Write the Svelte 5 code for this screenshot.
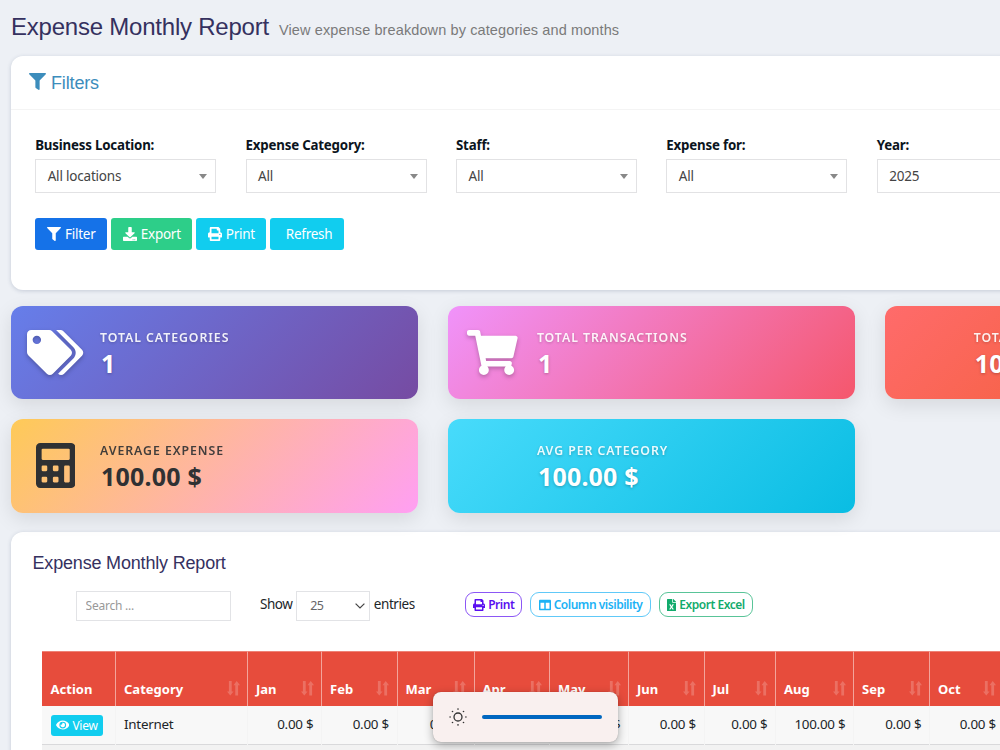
<script lang="ts">
  type Icon = { box: string; d: string };

  const icons: Record<string, Icon> = {
    filter: {
      box: '0 0 512 512',
      d: 'M487.976 0H24.028C2.71 0-8.047 25.866 7.058 40.971L192 225.941V432c0 7.831 3.821 15.17 10.237 19.662l80 55.98C298.02 518.69 320 507.493 320 487.98V225.941l184.947-184.97C520.021 25.896 509.338 0 487.976 0z'
    },
    download: {
      box: '0 0 512 512',
      d: 'M216 0h80c13.3 0 24 10.7 24 24v168h87.7c17.8 0 26.7 21.5 14.1 34.1L269.7 378.3c-7.5 7.5-19.8 7.5-27.3 0L90.1 226.1c-12.6-12.6-3.7-34.1 14.1-34.1H192V24c0-13.3 10.7-24 24-24zm296 376v112c0 13.3-10.7 24-24 24H24c-13.3 0-24-10.7-24-24V376c0-13.3 10.7-24 24-24h146.7l49 49c20.1 20.1 52.5 20.1 72.6 0l49-49H488c13.3 0 24 10.7 24 24zm-124 88c0-11-9-20-20-20s-20 9-20 20 9 20 20 20 20-9 20-20zm64 0c0-11-9-20-20-20s-20 9-20 20 9 20 20 20 20-9 20-20z'
    },
    print: {
      box: '0 0 512 512',
      d: 'M448 192V77.25c0-8.49-3.37-16.62-9.37-22.63L393.37 9.37c-6-6-14.14-9.37-22.63-9.37H96C78.33 0 64 14.33 64 32v160c-35.35 0-64 28.65-64 64v112c0 8.84 7.16 16 16 16h48v96c0 17.67 14.33 32 32 32h320c17.67 0 32-14.33 32-32v-96h48c8.84 0 16-7.16 16-16V256c0-35.35-28.65-64-64-64zm-64 256H128v-96h256v96zm0-224H128V64h192v48c0 8.84 7.16 16 16 16h48v96zm48 72c-13.25 0-24-10.75-24-24 0-13.26 10.75-24 24-24s24 10.74 24 24c0 13.25-10.75 24-24 24z'
    },
    eye: {
      box: '0 0 576 512',
      d: 'M572.52 241.4C518.29 135.59 410.93 64 288 64S57.68 135.64 3.48 241.41a32.35 32.35 0 0 0 0 29.19C57.71 376.41 165.07 448 288 448s230.32-71.64 284.52-177.41a32.35 32.35 0 0 0 0-29.19zM288 400a144 144 0 1 1 144-144 143.93 143.93 0 0 1-144 144zm0-240a95.31 95.31 0 0 0-25.31 3.79 47.85 47.85 0 0 1-66.9 66.9A95.78 95.78 0 1 0 288 160z'
    },
    columns: {
      box: '0 0 512 512',
      d: 'M464 32H48C21.49 32 0 53.49 0 80v352c0 26.51 21.49 48 48 48h416c26.51 0 48-21.49 48-48V80c0-26.51-21.49-48-48-48zM224 416H64V160h160v256zm224 0H288V160h160v256z'
    },
    excel: {
      box: '0 0 384 512',
      d: 'M224 136V0H24C10.7 0 0 10.7 0 24v464c0 13.3 10.7 24 24 24h336c13.3 0 24-10.7 24-24V160H248c-13.2 0-24-10.8-24-24zm60.1 106.5L224 336l60.1 93.5c5.1 8-.6 18.5-10.1 18.5h-34.9c-4.4 0-8.5-2.4-10.6-6.3C208.9 405.5 192 373 192 373c-6.4 14.8-10 20-36.6 68.8-2.1 3.9-6.1 6.3-10.5 6.3H110c-9.5 0-15.2-10.5-10.1-18.5l60.3-93.5-60.3-93.5c-5.2-8 .6-18.5 10.1-18.5h34.8c4.4 0 8.5 2.4 10.6 6.3 26.1 48.8 20 33.6 36.6 68.5 0 0 6.1-11.7 36.6-68.5 2.1-3.9 6.2-6.3 10.6-6.3H274c9.5-.1 15.2 10.4 10.1 18.4zM384 121.9v6.1H256V0h6.1c6.4 0 12.5 2.5 17 7l97.9 98c4.5 4.5 7 10.6 7 16.9z'
    },
    tags: {
      box: '0 0 640 512',
      d: 'M497.941 225.941L286.059 14.059A48 48 0 0 0 252.118 0H48C21.49 0 0 21.49 0 48v204.118a48 48 0 0 0 14.059 33.941l211.882 211.882c18.744 18.745 49.136 18.746 67.882 0l204.118-204.118c18.745-18.745 18.745-49.137 0-67.882zM112 160c-26.51 0-48-21.49-48-48s21.49-48 48-48 48 21.49 48 48-21.49 48-48 48zm513.941 133.823L421.823 497.941c-18.745 18.745-49.137 18.745-67.882 0l-.36-.36L527.64 323.522c16.999-16.999 26.36-39.6 26.36-63.64s-9.362-46.641-26.36-63.64L331.397 0h48.721a48 48 0 0 1 33.941 14.059l211.882 211.882c18.745 18.745 18.745 49.137 0 67.882z'
    },
    cart: {
      box: '0 0 576 512',
      d: 'M528.12 301.319l47.273-208C578.806 78.301 567.391 64 551.99 64H159.208l-9.166-44.81C147.758 8.021 137.93 0 126.529 0H24C10.745 0 0 10.745 0 24v16c0 13.255 10.745 24 24 24h69.883l70.248 343.435C147.325 417.1 136 435.222 136 456c0 30.928 25.072 56 56 56s56-25.072 56-56c0-15.674-6.447-29.835-16.824-40h209.647C430.447 426.165 424 440.326 424 456c0 30.928 25.072 56 56 56s56-25.072 56-56c0-22.172-12.888-41.332-31.579-50.405l5.517-24.276c3.413-15.018-8.002-29.319-23.403-29.319H218.117l-6.545-32h293.145c11.206 0 20.92-7.754 23.403-18.681z'
    },
    calculator: {
      box: '0 0 448 512',
      d: 'M400 0H48C22.4 0 0 22.4 0 48v416c0 25.6 22.4 48 48 48h352c25.6 0 48-22.4 48-48V48c0-25.6-22.4-48-48-48zM77 64h294q13 0 13 13v102q0 13-13 13H77q-13 0-13-13V77q0-13 13-13zM77 256h38q13 0 13 13v38q0 13-13 13H77q-13 0-13-13v-38q0-13 13-13zM205 256h38q13 0 13 13v38q0 13-13 13h-38q-13 0-13-13v-38q0-13 13-13zM77 384h38q13 0 13 13v38q0 13-13 13H77q-13 0-13-13v-38q0-13 13-13zM205 384h38q13 0 13 13v38q0 13-13 13h-38q-13 0-13-13v-38q0-13 13-13zM333 256h38q13 0 13 13v166q0 13-13 13h-38q-13 0-13-13V269q0-13 13-13z'
    }
  };

  const filters = [
    { label: 'Business Location:', value: 'All locations' },
    { label: 'Expense Category:', value: 'All' },
    { label: 'Staff:', value: 'All' },
    { label: 'Expense for:', value: 'All' },
    { label: 'Year:', value: '2025' }
  ];

  const cards = [
    { tone: 'indigo', icon: 'tags', label: 'Total Categories', value: '1' },
    { tone: 'pink', icon: 'cart', label: 'Total Transactions', value: '1' },
    { tone: 'red', icon: '', label: 'Total Amount', value: '100.00 $' },
    { tone: 'peach', icon: 'calculator', label: 'Average Expense', value: '100.00 $' },
    { tone: 'cyan', icon: '', label: 'Avg per Category', value: '100.00 $' }
  ];

  const months = [
    { name: 'Jan', total: '0.00 $', width: 74 },
    { name: 'Feb', total: '0.00 $', width: 75.5 },
    { name: 'Mar', total: '0.00 $', width: 77 },
    { name: 'Apr', total: '0.00 $', width: 75.5 },
    { name: 'May', total: '0.00 $', width: 79 },
    { name: 'Jun', total: '0.00 $', width: 75.5 },
    { name: 'Jul', total: '0.00 $', width: 71.5 },
    { name: 'Aug', total: '100.00 $', width: 78 },
    { name: 'Sep', total: '0.00 $', width: 76 },
    { name: 'Oct', total: '0.00 $', width: 74.5 }
  ];

  const columns = ['74px', '132px', ...months.map((m) => `${m.width}px`)].join(' ');
</script>

{#snippet icon(name: string)}
  <svg class="icon {name}" viewBox={icons[name].box} aria-hidden="true">
    <path fill="currentColor" fill-rule="evenodd" d={icons[name].d} />
  </svg>
{/snippet}

{#snippet sort()}
  <svg class="sort" viewBox="0 0 13 15" aria-hidden="true">
    <path fill="currentColor" d="M1.9 0h2.8v10.4h1.8L3.3 14.6 0 10.4h1.9zM8.3 14.6V4.2H6.5L9.7 0 13 4.2h-1.9v10.4z" />
  </svg>
{/snippet}

<div class="page">
  <header class="page-header">
    <h1>Expense Monthly Report</h1>
    <small>View expense breakdown by categories and months</small>
  </header>

  <section class="box filter-box">
    <div class="box-header">
      {@render icon('filter')}
      <h3>Filters</h3>
    </div>
    <div class="filter-grid">
      {#each filters as f}
        <div class="field">
          <span class="field-label">{f.label}</span>
          <div class="select">
            <span>{f.value}</span>
            <i class="caret"></i>
          </div>
        </div>
      {/each}
    </div>
    <div class="actions">
      <button class="btn blue">{@render icon('filter')}<span>Filter</span></button>
      <button class="btn green">{@render icon('download')}<span>Export</span></button>
      <button class="btn aqua">{@render icon('print')}<span>Print</span></button>
      <button class="btn aqua refresh"><span>Refresh</span></button>
    </div>
  </section>

  <section class="cards">
    {#each cards as card}
      <div class="card {card.tone}">
        <div class="card-icon">
          {#if card.icon}{@render icon(card.icon)}{/if}
        </div>
        <div class="card-text">
          <span class="card-label">{card.label}</span>
          <span class="card-value">{card.value}</span>
        </div>
      </div>
    {/each}
  </section>

  <section class="box report">
    <h3 class="report-title">Expense Monthly Report</h3>

    <div class="toolbar">
      <input class="search" type="text" placeholder="Search ..." />
      <div class="length">
        <span>Show</span>
        <div class="length-select">
          <span>25</span>
          <svg viewBox="0 0 10 6" width="10" height="6">
            <path d="M.6.6 5 5 9.4.6" fill="none" stroke="#444" stroke-width="1.2" />
          </svg>
        </div>
        <span>entries</span>
      </div>
      <div class="exports">
        <button class="pill violet">{@render icon('print')}<span>Print</span></button>
        <button class="pill sky">{@render icon('columns')}<span>Column visibility</span></button>
        <button class="pill emerald">{@render icon('excel')}<span>Export Excel</span></button>
      </div>
    </div>

    <div class="table">
      <div class="row head" style="grid-template-columns: {columns}">
        <div class="cell">Action</div>
        <div class="cell category"><span>Category</span>{@render sort()}</div>
        {#each months as m}
          <div class="cell"><span>{m.name}</span>{@render sort()}</div>
        {/each}
      </div>
      <div class="row body" style="grid-template-columns: {columns}">
        <div class="cell"><button class="view">{@render icon('eye')}<span>View</span></button></div>
        <div class="cell name">Internet</div>
        {#each months as m}
          <div class="cell amount">{m.total}</div>
        {/each}
      </div>
      <div class="row foot"></div>
    </div>
  </section>
</div>

<div class="brightness">
  <svg viewBox="0 0 18 18" width="18" height="18" aria-hidden="true">
    <circle cx="9" cy="9" r="4" fill="none" stroke="#333" stroke-width="1.3" />
    <g fill="#333">
      <circle cx="9" cy="1.1" r=".8" /><circle cx="9" cy="16.9" r=".8" />
      <circle cx="1.1" cy="9" r=".8" /><circle cx="16.9" cy="9" r=".8" />
      <circle cx="3.5" cy="3.5" r=".8" /><circle cx="14.5" cy="3.5" r=".8" />
      <circle cx="3.5" cy="14.5" r=".8" /><circle cx="14.5" cy="14.5" r=".8" />
    </g>
  </svg>
  <div class="track"></div>
</div>

<style>
  :global(body) {
    background: #edf0f5;
    overflow: hidden;
    height: 750px;
  }

  .page {
    width: 1281px;
    height: 750px;
    overflow: hidden;
    padding: 0 11px;
    font-family: 'Noto Sans', 'Open Sans', sans-serif;
    font-size: 13.5px;
    color: #212529;
  }

  .page *,
  .brightness {
    box-sizing: border-box;
  }

  h1,
  h3,
  .page-header small {
    font-family: 'Liberation Sans', Arial, sans-serif;
    font-weight: 400;
    margin: 0;
  }

  button {
    font-family: inherit;
    border: 0;
    margin: 0;
    white-space: nowrap;
  }

  .icon {
    display: block;
    flex-shrink: 0;
    width: 14px;
    height: 14px;
  }

  .page-header {
    display: flex;
    align-items: baseline;
    gap: 10px;
    height: 55.5px;
    padding-top: 13px;
  }

  .page-header h1 {
    font-size: 24px;
    line-height: 28px;
    letter-spacing: -0.22px;
    color: #35315f;
  }

  .page-header small {
    font-size: 14.5px;
    letter-spacing: 0.11px;
    color: #7a7a7a;
  }

  .box {
    background: #fff;
    border-radius: 12px;
    box-shadow: 0 1px 4px rgba(40, 60, 100, 0.2);
  }

  .filter-box {
    height: 234.5px;
  }

  .box-header {
    display: flex;
    align-items: center;
    gap: 5px;
    height: 54px;
    padding: 0 18px;
    border-bottom: 1px solid #f4f4f4;
    color: #3c8dbc;
  }

  .box-header .icon {
    width: 17px;
    height: 17px;
    margin-top: -1px;
  }

  .box-header h3 {
    font-size: 18px;
    letter-spacing: -0.15px;
    padding-top: 2px;
  }

  .filter-grid {
    display: grid;
    grid-template-columns: repeat(6, 181px);
    column-gap: 29.4px;
    padding: 25.5px 24.2px 0;
  }

  .field-label {
    display: block;
    height: 24px;
    line-height: 20px;
    font-size: 13.3px;
    font-weight: 700;
    letter-spacing: -0.2px;
    color: #0b1420;
  }

  .select {
    display: flex;
    align-items: center;
    justify-content: space-between;
    height: 33.5px;
    padding: 1px 8px 0 11.5px;
    border: 1px solid #e2e2e4;
    color: #444;
    font-size: 13.5px;
    letter-spacing: -0.2px;
  }

  .caret {
    border: 4px solid transparent;
    border-top: 5px solid #888;
    border-bottom: 0;
  }

  .actions {
    display: flex;
    gap: 4px;
    padding: 25px 24.3px 0;
  }

  .btn {
    display: flex;
    align-items: center;
    justify-content: center;
    gap: 4px;
    height: 32px;
    padding: 0;
    border-radius: 3px;
    color: #fff;
    font-size: 13.5px;
    letter-spacing: -0.28px;
  }

  .blue {
    width: 72px;
    background: #1572e8;
  }

  .green {
    width: 81px;
    background: #2dce89;
  }

  .aqua {
    width: 70px;
    background: #11cdef;
  }

  .refresh {
    width: 73.5px;
    padding-left: 4px;
  }

  .cards {
    display: grid;
    grid-template-columns: repeat(3, 407.3px);
    gap: 19.8px 29.6px;
    padding-top: 15.8px;
  }

  .card {
    display: flex;
    align-items: center;
    height: 93.5px;
    padding: 0 12px;
    border-radius: 12px;
    color: #fff;
    box-shadow: 0 6px 20px rgba(0, 0, 0, 0.1);
  }

  .card-icon {
    display: flex;
    justify-content: center;
    width: 65px;
    margin-right: 12px;
  }

  .card-icon .icon {
    width: auto;
    height: 45px;
    filter: drop-shadow(0 2px 2px rgba(0, 0, 0, 0.25));
  }

  .card-text {
    display: flex;
    flex-direction: column;
    padding-top: 2px;
    text-shadow: 0 1px 3px rgba(0, 0, 0, 0.25);
  }

  .card-label {
    font-size: 12.3px;
    line-height: 19px;
    font-weight: 600;
    letter-spacing: 0.95px;
    text-transform: uppercase;
    opacity: 0.9;
  }

  .card-value {
    font-size: 25px;
    line-height: 32px;
    font-weight: 700;
    letter-spacing: 0.2px;
    padding-left: 1px;
  }

  .indigo { background: linear-gradient(135deg, #667eea, #764ba2); }
  .pink { background: linear-gradient(135deg, #f093fb, #f5576c); }
  .red { background: linear-gradient(135deg, #ff6b6b, #ee5a24); }
  .peach { background: linear-gradient(135deg, #feca57, #ff9ff3); color: #2f3133; }
  .cyan { background: linear-gradient(135deg, #48dbfb, #0abde3); }

  .peach .card-text {
    text-shadow: none;
  }

  .peach .icon {
    filter: none;
  }

  .report {
    height: 240px;
    margin-top: 19.3px;
    padding: 20px 22px 0 31px;
  }

  .report-title {
    margin-left: -9.5px;
    font-size: 18px;
    line-height: 22px;
    letter-spacing: -0.18px;
    color: #35315f;
  }

  .toolbar {
    display: flex;
    height: 77.5px;
    padding: 17.2px 0 0 33.6px;
  }

  .search {
    width: 155.4px;
    height: 29.5px;
    padding: 0 9px;
    border: 1px solid #e2e3e6;
    font: 12px 'Noto Sans', sans-serif;
    letter-spacing: -0.25px;
  }

  .search::placeholder {
    color: #999;
  }

  .length {
    display: flex;
    gap: 3.7px;
    width: 205px;
    margin-left: 29px;
    line-height: 27px;
    letter-spacing: -0.45px;
  }

  .length-select {
    display: flex;
    align-items: center;
    justify-content: space-between;
    width: 74px;
    height: 29.5px;
    padding: 0 4px 0 13px;
    border: 1px solid #e2e3e6;
    font-size: 12.5px;
    color: #666;
  }

  .exports {
    display: flex;
    gap: 7.7px;
    padding-top: 1px;
  }

  .pill {
    display: flex;
    align-items: center;
    justify-content: center;
    gap: 3px;
    height: 25px;
    padding: 0;
    border: 1px solid color-mix(in srgb, currentColor 70%, white);
    border-radius: 9px;
    background: #fff;
    font-size: 12px;
    font-weight: 600;
    letter-spacing: -0.47px;
  }

  .pill .icon {
    height: 12px;
    width: 12px;
  }

  .pill .excel {
    width: 9px;
  }

  .violet { width: 57.5px; color: #5a0ff0; }
  .sky { width: 120.8px; color: #1cb2f5; }
  .emerald { width: 94.6px; color: #12ab6c; }

  .row {
    display: grid;
  }

  .head {
    height: 54.5px;
    background: #e74c3c;
    color: #fff;
    font-size: 13px;
    font-weight: 700;
  }

  .head .cell {
    display: flex;
    align-items: flex-end;
    justify-content: space-between;
    padding: 0 7.5px 8px 8px;
    border-top: 1px solid #ee8276;
    border-right: 1px solid #f3a49b;
    line-height: 18px;
  }

  .head .cell:first-child {
    padding-left: 8.6px;
  }

  .sort {
    width: 13px;
    height: 15px;
    margin-bottom: 2px;
    opacity: 0.2;
  }

  .body {
    height: 39px;
    background: #f8f8f8;
    border-bottom: 1px solid #d9d9db;
  }

  .body .cell {
    padding: 9px 8px;
    border-right: 1px solid #f4f4f4;
    line-height: 19px;
    font-size: 13.4px;
    letter-spacing: -0.25px;
    white-space: nowrap;
  }

  .body .amount {
    padding-right: 7.6px;
    text-align: right;
  }

  .view {
    display: flex;
    align-items: center;
    justify-content: center;
    gap: 3px;
    width: 52.5px;
    height: 21px;
    margin-left: 0.5px;
    padding: 0;
    border-radius: 3px;
    background: #11cdef;
    color: #fff;
    font-size: 12px;
    letter-spacing: -0.3px;
  }

  .view .icon {
    width: 13.5px;
    height: 12px;
  }

  .foot {
    height: 6px;
    background: #f2f2f2;
  }

  .brightness {
    position: absolute;
    left: 433px;
    top: 692px;
    display: flex;
    align-items: center;
    gap: 15px;
    width: 185px;
    height: 50px;
    padding: 0 16px 1px;
    border-radius: 8px;
    background: #f9f0ef;
    box-shadow: 0 3px 10px rgba(0, 0, 0, 0.32), 0 0 1px rgba(0, 0, 0, 0.3);
  }

  .track {
    width: 120px;
    height: 4px;
    border-radius: 2px;
    background: #0067c0;
  }
</style>
